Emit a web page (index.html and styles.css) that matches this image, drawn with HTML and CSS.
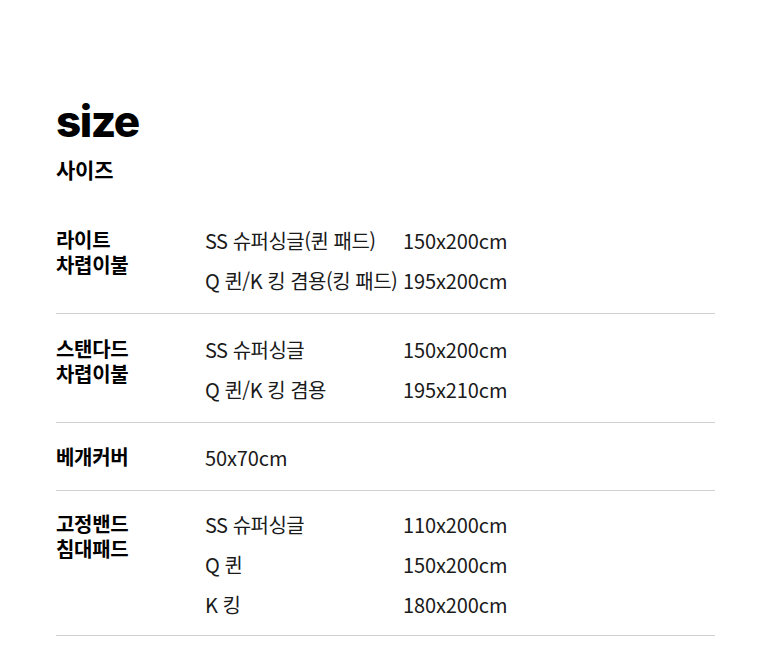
FILE: index.html
```html
<!DOCTYPE html>
<html lang="ko">
<head>
<meta charset="utf-8">
<link rel="stylesheet" href="styles.css">
</head>
<body>
<div class="page">
  <h1 class="title">size</h1>
  <h2 class="subtitle">사이즈</h2>
  <div class="table">
    <div class="row">
      <div class="label">라이트<br>차렵이불</div>
      <div class="values">
        <div class="line"><span class="name">SS 슈퍼싱글(퀸 패드)</span><span class="dim">150x200cm</span></div>
        <div class="line"><span class="name">Q 퀸/K 킹 겸용(킹 패드)</span><span class="dim">195x200cm</span></div>
      </div>
    </div>
    <div class="row">
      <div class="label">스탠다드<br>차렵이불</div>
      <div class="values">
        <div class="line"><span class="name">SS 슈퍼싱글</span><span class="dim">150x200cm</span></div>
        <div class="line"><span class="name">Q 퀸/K 킹 겸용</span><span class="dim">195x210cm</span></div>
      </div>
    </div>
    <div class="row">
      <div class="label">베개커버</div>
      <div class="values">
        <div class="line"><span class="dim">50x70cm</span></div>
      </div>
    </div>
    <div class="row">
      <div class="label">고정밴드<br>침대패드</div>
      <div class="values">
        <div class="line"><span class="name">SS 슈퍼싱글</span><span class="dim">110x200cm</span></div>
        <div class="line"><span class="name">Q 퀸</span><span class="dim">150x200cm</span></div>
        <div class="line"><span class="name">K 킹</span><span class="dim">180x200cm</span></div>
      </div>
    </div>
  </div>
</div>
</body>
</html>
```
FILE: styles.css
```css
html, body {
  margin: 0;
  padding: 0;
  background: #ffffff;
}
body {
  font-family: "Noto Sans CJK KR", "Noto Sans", sans-serif;
  color: #111111;
}
.page {
  width: 659px;
  padding: 96px 0 0 56px;
}
.title {
  margin: 0;
  font-family: "Inter", "Noto Sans", sans-serif;
  font-weight: 800;
  font-size: 44px;
  line-height: 50px;
  letter-spacing: -1.5px;
  color: #000;
}
.subtitle {
  margin: 10px 0 0 0;
  font-size: 21px;
  font-weight: 700;
  line-height: 26px;
  letter-spacing: -0.2px;
  color: #000;
}
.table {
  margin-top: 23px;
}
.row {
  display: flex;
  padding: 15px 0 13px 0;
  border-bottom: 1px solid #d0d0d0;
}
.row:nth-child(3) {
  padding-top: 14px;
}
.row:nth-child(4) {
  padding-top: 13px;
  padding-bottom: 11px;
}
.label {
  width: 149px;
  flex: none;
  font-size: 20px;
  font-weight: 700;
  line-height: 25px;
  padding-top: 7px;
  letter-spacing: -0.3px;
  color: #000;
}
.values {
  display: flex;
  flex-direction: column;
}
.line {
  display: flex;
  height: 40px;
  align-items: center;
  font-size: 20px;
  font-weight: 400;
  color: #1a1a1a;
}
.name {
  width: 198px;
  flex: none;
  letter-spacing: -0.5px;
}
.dim {
  white-space: nowrap;
  letter-spacing: -0.1px;
}
```
